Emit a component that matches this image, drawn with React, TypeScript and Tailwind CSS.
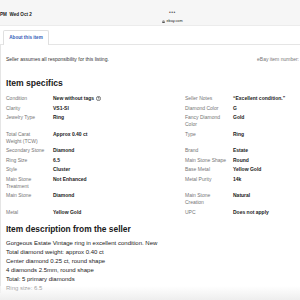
import React from "react";

const rows: [string[], string, string[], string][] = [
  [["Condition"], "New without tags", ["Seller Notes"], "\u201CExcellent condition.\u201D"],
  [["Clarity"], "VS1-SI", ["Diamond Color"], "G"],
  [["Jewelry Type"], "Ring", ["Fancy Diamond", "Color"], "Gold"],
  [["Total Carat", "Weight (TCW)"], "Approx 0.40 ct", ["Type"], "Ring"],
  [["Secondary Stone"], "Diamond", ["Brand"], "Estate"],
  [["Ring Size"], "6.5", ["Main Stone Shape"], "Round"],
  [["Style"], "Cluster", ["Base Metal"], "Yellow Gold"],
  [["Main Stone", "Treatment"], "Not Enhanced", ["Metal Purity"], "14k"],
  [["Main Stone"], "Diamond", ["Main Stone", "Creation"], "Natural"],
  [["Metal"], "Yellow Gold", ["UPC"], "Does not apply"],
];

const desc = [
  "Gorgeous Estate Vintage ring in excellent condition. New",
  "Total diamond weight: approx 0.40 ct",
  "Center diamond 0.25 ct, round shape",
  "4 diamonds 2.5mm, round shape",
  "Total: 5 primary diamonds",
  "Ring size: 6.5",
];

function Label({ lines }: { lines: string[] }) {
  return (
    <div className="text-[5px] leading-[7px] text-[#767676] whitespace-nowrap">
      {lines.map((l, i) => (
        <div key={i}>{l}</div>
      ))}
    </div>
  );
}

function InfoIcon() {
  return (
    <svg width="5" height="5" viewBox="0 0 10 10" className="inline-block ml-[1.5px] -mt-[1px] align-middle">
      <circle cx="5" cy="5" r="4.2" fill="none" stroke="#191919" strokeWidth="1.1" />
      <path d="M3.7 4 C3.7 2.6 6.3 2.6 6.3 4 C6.3 5 5 5 5 6" fill="none" stroke="#191919" strokeWidth="1" />
      <circle cx="5" cy="7.4" r="0.6" fill="#191919" />
    </svg>
  );
}

export default function App() {
  return (
    <div
      className="relative w-[300px] h-[300px] overflow-hidden bg-white text-[#191919]"
      style={{ fontFamily: '"Liberation Sans", Arial, sans-serif' }}
    >
      {/* status bar */}
      <div className="h-[26px] bg-[#f6f6f6] border-b border-[#ececec] flex">
        <div className="w-[152px] pt-[12px] text-[4.6px] leading-[6px] font-semibold whitespace-nowrap">
          PM&nbsp;&nbsp;Wed Oct 2
        </div>
        <div className="w-[41px] flex flex-col items-center pt-[10px]">
          <div className="text-[5px] leading-[5px] tracking-[0.5px] text-[#555]">•••</div>
          <div className="mt-[4px] text-[3.8px] leading-[5px] text-[#222] whitespace-nowrap flex items-center">
            <svg width="3" height="3.5" viewBox="0 0 6 7" className="mr-[1px]">
              <rect x="0.5" y="3" width="5" height="4" rx="0.5" fill="#555" />
              <path d="M1.5 3 V2 a1.5 1.5 0 0 1 3 0 V3" fill="none" stroke="#555" strokeWidth="0.8" />
            </svg>
            ebay.com
          </div>
        </div>
      </div>

      {/* tab strip */}
      <div className="h-[19px] flex items-end pl-[3px] border-b border-[#e5e5e5]">
        <div className="w-[46px] h-[15px] -mb-px bg-white border border-b-0 border-[#e0e0e0] rounded-t-[2px] flex items-center justify-center">
          <span className="text-[4.6px] leading-[6px] font-bold text-[#2f5bb7] whitespace-nowrap">
            About this item
          </span>
        </div>
      </div>

      {/* content */}
      <div className="border-l border-[#e5e5e5] pl-[5px] pr-[1px]">
        <div className="pt-[11px] flex justify-between text-[5px] leading-[7px] whitespace-nowrap">
          <span className="text-[#333]">Seller assumes all responsibility for this listing.</span>
          <span className="text-[#767676]">eBay item number:</span>
        </div>

        <h2 className="mt-[15px] text-[8.6px] leading-[11px] font-bold">Item specifics</h2>

        <div className="mt-[6px] flex flex-col gap-[2.5px]">
          {rows.map(([ll, lv, rl, rv], i) => (
            <div key={i} className="grid grid-cols-[47px_132px_48px_1fr] items-start">
              <Label lines={ll} />
              <div className="text-[5px] leading-[7px] font-bold whitespace-nowrap text-[#222]">
                {lv}
                {i === 0 && <InfoIcon />}
              </div>
              <Label lines={rl} />
              <div className="text-[5px] leading-[7px] font-bold whitespace-nowrap text-[#222]">{rv}</div>
            </div>
          ))}
        </div>

        <h2 className="mt-[8.5px] text-[8.4px] leading-[11px] font-bold whitespace-nowrap">
          Item description from the seller
        </h2>

        <div className="mt-[4px] text-[6px] leading-[9px] text-[#222]">
          {desc.map((d, i) => (
            <div key={i} className="whitespace-nowrap">{d}</div>
          ))}
        </div>
      </div>

      {/* bottom fade */}
      <div className="absolute left-0 right-0 bottom-0 h-[14px] bg-gradient-to-b from-white/50 to-[#eeeeee]" />
    </div>
  );
}
